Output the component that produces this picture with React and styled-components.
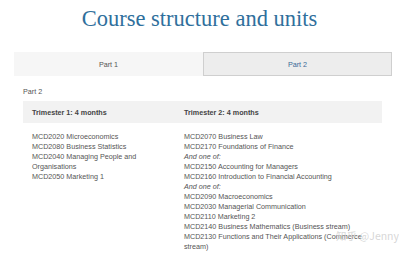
import React from "react";
import styled, { createGlobalStyle } from "styled-components";

const GlobalStyle = createGlobalStyle`
  html, body {
    margin: 0;
    padding: 0;
    background: #fff;
  }
  body {
    font-family: "Liberation Sans", Arial, sans-serif;
    color: #555;
  }
`;

const trimesters = [
  {
    title: "Trimester 1: 4 months",
    units: [
      "MCD2020 Microeconomics",
      "MCD2080 Business Statistics",
      "MCD2040 Managing People and Organisations",
      "MCD2050 Marketing 1",
    ],
  },
  {
    title: "Trimester 2: 4 months",
    units: [
      "MCD2070 Business Law",
      "MCD2170 Foundations of Finance",
      { note: "And one of:" },
      "MCD2150 Accounting for Managers",
      "MCD2160 Introduction to Financial Accounting",
      { note: "And one of:" },
      "MCD2090 Macroeconomics",
      "MCD2030 Managerial Communication",
      "MCD2110 Marketing 2",
      "MCD2140 Business Mathematics (Business stream)",
      "MCD2130 Functions and Their Applications (Commerce stream)",
    ],
  },
];

const App = () => {
  return (
    <Page>
      <GlobalStyle />
      <Title>Course structure and units</Title>
      <Tabs>
        <Tab>Part 1</Tab>
        <Tab active>Part 2</Tab>
      </Tabs>
      <Section>
        <PartLabel>Part 2</PartLabel>
        <Table>
          <thead>
            <tr>
              {trimesters.map((t) => (
                <Th key={t.title}>{t.title}</Th>
              ))}
            </tr>
          </thead>
          <tbody>
            <tr>
              {trimesters.map((t) => (
                <Td key={t.title}>
                  {t.units.map((u, i) =>
                    typeof u === "string" ? (
                      <Unit key={i}>{u}</Unit>
                    ) : (
                      <Note key={i}>{u.note}</Note>
                    )
                  )}
                </Td>
              ))}
            </tr>
          </tbody>
        </Table>
      </Section>
      <Watermark>知乎 @Jenny</Watermark>
    </Page>
  );
};

export default App;

const Page = styled.div`
  position: relative;
  width: 399px;
  height: 257px;
  overflow: hidden;
  padding-top: 5px;
  box-sizing: border-box;
`;

const Title = styled.h1`
  margin: 0;
  text-align: center;
  font-family: "Liberation Serif", "Times New Roman", serif;
  font-weight: normal;
  font-size: 22.5px;
  line-height: 28px;
  color: #2f6f9c;
`;

const Tabs = styled.div`
  display: flex;
  margin: 19px 7px 0 14px;
  height: 24px;
`;

const Tab = styled.div`
  flex: 1;
  display: flex;
  align-items: center;
  justify-content: center;
  font-size: 7.2px;
  color: ${({ active }) => (active ? "#3a6a98" : "#555")};
  background: ${({ active }) => (active ? "#ededed" : "#f6f6f6")};
  border: 1px solid ${({ active }) => (active ? "#cfcfcf" : "#f6f6f6")};
  box-sizing: border-box;
`;

const Section = styled.div`
  padding: 11px 17px 0 23px;
`;

const PartLabel = styled.div`
  font-size: 7.2px;
  line-height: 10px;
  color: #555;
  margin-bottom: 4px;
`;

const Table = styled.table`
  width: 359px;
  border-collapse: collapse;
  table-layout: fixed;
`;

const Th = styled.th`
  text-align: left;
  font-size: 7.2px;
  font-weight: bold;
  color: #444;
  background: #f2f2f2;
  height: 22px;
  padding: 0 9px;
  &:first-child {
    width: 134px;
  }
`;

const Td = styled.td`
  vertical-align: top;
  padding: 9px 9px 0;
  font-size: 7.2px;
  line-height: 10px;
  color: #555;
`;

const Unit = styled.div``;

const Note = styled.div`
  font-style: italic;
`;

const Watermark = styled.div`
  position: absolute;
  left: 336px;
  top: 229px;
  font-family: "Noto Sans CJK SC", "Liberation Sans", sans-serif;
  font-size: 10.5px;
  line-height: 14px;
  color: rgba(205, 205, 205, 0.8);
`;
